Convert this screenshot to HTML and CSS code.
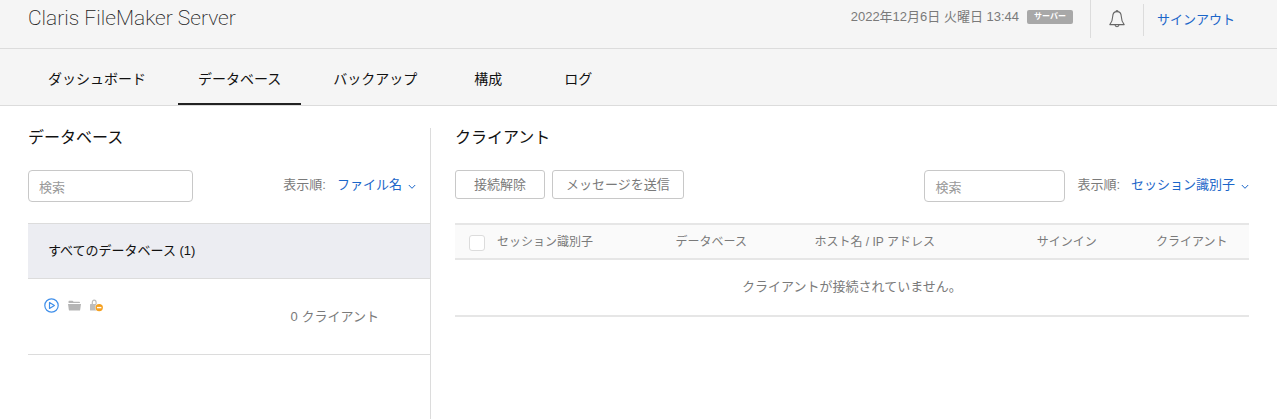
FILE: index.html
```html
<!DOCTYPE html>
<html lang="ja">

<head>
  <meta charset="utf-8">
  <title>Claris FileMaker Server</title>
  <link rel="stylesheet" href="styles.css">
</head>

<body>
  <header class="header">
    <h1 class="brand">Claris FileMaker Server</h1>
    <div class="status">
      <span>2022年12月6日 火曜日 13:44</span>
      <span class="badge">サーバー</span>
    </div>
    <button type="button" class="bell" aria-label="通知">
      <svg width="16" height="18" viewBox="0 0 16 18" fill="none" stroke="#666" stroke-width="1.1" stroke-linejoin="round">
        <path d="M8 1.6C5.2 1.6 3.8 3.8 3.7 6.4C3.6 10 2.9 12 .8 14.6H15.2C13.1 12 12.4 10 12.3 6.4C12.2 3.8 10.8 1.6 8 1.6Z"/>
        <path d="M7 1.6C7 .3 9 .3 9 1.6M6 14.8C6.2 17.4 9.8 17.4 10 14.8"/>
      </svg>
    </button>
    <div class="account">
      <a href="#">サインアウト</a>
    </div>
  </header>

  <nav class="tabs">
    <a href="#" class="tab">ダッシュボード</a>
    <a href="#" class="tab active">データベース</a>
    <a href="#" class="tab">バックアップ</a>
    <a href="#" class="tab">構成</a>
    <a href="#" class="tab">ログ</a>
  </nav>

  <main class="main">
    <section class="databases">
      <h2>データベース</h2>
      <div class="tools">
        <input type="text" class="search" placeholder="検索" aria-label="データベースを検索">
        <div class="sort">
          <label for="db-sort">表示順:</label>
          <select id="db-sort">
            <option>ファイル名</option>
          </select>
          <svg width="8" height="6" viewBox="0 0 8 6" fill="none" stroke="#1b66c9"><path d="M.8 1L4 4.3L7.2 1"/></svg>
        </div>
      </div>
      <div class="group">すべてのデータベース (1)</div>
      <div class="db">
        <div class="db-icons">
          <svg width="15" height="15" viewBox="0 0 15 15" fill="none" stroke="#3f8fea" stroke-linejoin="round">
            <circle cx="7.5" cy="7.5" r="6.7" stroke-width="1.2"/>
            <path d="M5.5 4.5V10.5L10.4 7.5Z" stroke-width="1.2"/>
          </svg>
          <svg width="13" height="11" viewBox="0 0 12 10" fill="#b5b5b5">
            <path d="M.5 1Q.5.5 1 .5H4.2L5.2 1.5H10.5Q11 1.5 11 2V2.8H.5Z"/>
            <path d="M0 3.6H12L11.2 9.1Q11.1 9.6 10.6 9.6H1.4Q.9 9.6.8 9.1Z"/>
          </svg>
          <svg width="13" height="13" viewBox="0 0 13 13">
            <path d="M2.3 6V3.6Q2.3 1.2 4.2 1.2T6.1 3.6V6" fill="none" stroke="#bdbdbd" stroke-width="1.2"/>
            <rect x="0" y="5" width="8" height="6.5" rx=".6" fill="#bdbdbd"/>
            <circle cx="9.2" cy="8.6" r="4" fill="#fff"/>
            <circle cx="9.2" cy="8.6" r="3.7" fill="#f5a01f"/>
            <path d="M7 8.6H11.4" stroke="#fff" stroke-width="1.4"/>
          </svg>
        </div>
        <span class="db-clients">0 クライアント</span>
      </div>
    </section>

    <section class="clients">
      <h2>クライアント</h2>
      <div class="tools">
        <div class="actions">
          <button type="button" class="btn">接続解除</button>
          <button type="button" class="btn">メッセージを送信</button>
        </div>
        <input type="text" class="search" placeholder="検索" aria-label="クライアントを検索">
        <div class="sort">
          <label for="client-sort">表示順:</label>
          <select id="client-sort">
            <option>セッション識別子</option>
          </select>
          <svg width="8" height="6" viewBox="0 0 8 6" fill="none" stroke="#1b66c9"><path d="M.8 1L4 4.3L7.2 1"/></svg>
        </div>
      </div>
      <table class="table">
        <thead>
          <tr>
            <th class="col-check"><input type="checkbox" aria-label="すべて選択"></th>
            <th class="col-session">セッション識別子</th>
            <th class="col-db">データベース</th>
            <th class="col-host">ホスト名 / IP アドレス</th>
            <th class="col-signin">サインイン</th>
            <th>クライアント</th>
          </tr>
        </thead>
        <tbody>
          <tr>
            <td colspan="6">クライアントが接続されていません。</td>
          </tr>
        </tbody>
      </table>
    </section>
  </main>
</body>

</html>
```
FILE: styles.css
```css
* {
  box-sizing: border-box;
}

body {
  margin: 0;
  min-height: 100vh;
  display: flex;
  flex-direction: column;
  font-family: "Liberation Sans", "Noto Sans CJK JP", sans-serif;
  font-size: 13px;
  line-height: 20px;
  color: #7a7a7a;
  background-color: #fff;
}

a {
  color: #1b66c9;
  text-decoration: none;
}

svg {
  display: block;
}

input,
select,
button {
  font: inherit;
}

/* header */

.header {
  display: flex;
  align-items: flex-start;
  height: 49px;
  padding: 0 28px;
  background-color: #f5f5f5;
  border-bottom: 1px solid #dcdcdc;
}

.brand {
  margin: 0 auto 0 0;
  font-family: Roboto, sans-serif;
  font-size: 21px;
  font-weight: 200;
  line-height: 36px;
  color: #222;
}

.status {
  display: flex;
  align-items: center;
  gap: 8px;
  height: 34px;
  margin-right: 17px;
}

.badge {
  padding: 0 7px;
  font-size: 8px;
  font-weight: bold;
  line-height: 14px;
  color: #fff;
  background-color: #a8a8a8;
  border-radius: 2px;
}

.bell {
  height: 38px;
  padding: 0 18px;
  background: none;
  border: none;
  border-left: 1px solid #dcdcdc;
  cursor: pointer;
}

.account {
  margin: 4px 14px 0 0;
  padding-left: 13px;
  line-height: 32px;
  border-left: 1px solid #dcdcdc;
}

/* tabs */

.tabs {
  display: flex;
  gap: 12px;
  padding: 0 28px;
  background-color: #f5f5f5;
  border-bottom: 1px solid #dcdcdc;
}

.tab {
  min-width: 78px;
  padding: 20px 20px 14px;
  font-size: 14px;
  text-align: center;
  color: #111;
  border-bottom: 2px solid transparent;
}

.tab.active {
  border-bottom-color: #222;
}

/* panels */

.main {
  flex: 1;
  display: flex;
  padding: 22px 28px 0;
}

.databases {
  flex: 0 0 33%;
  border-right: 1px solid #dcdcdc;
}

.clients {
  flex: 1;
  padding-left: 24px;
}

h2 {
  margin: 0 0 22px;
  font-size: 16px;
  font-weight: normal;
  line-height: 20px;
  color: #111;
}

.tools {
  display: flex;
  align-items: flex-start;
  margin-bottom: 21px;
}

.search {
  width: 165px;
  height: 32px;
  padding: 2px 10px 0;
  color: #333;
  border: 1px solid #c8c8c8;
  border-radius: 4px;
}

.search::placeholder {
  color: #999;
}

.sort {
  display: flex;
  align-items: center;
  height: 30px;
}

.sort label {
  margin-right: 11px;
}

.sort select {
  appearance: none;
  padding: 0;
  margin-right: 5px;
  color: #1b66c9;
  background: none;
  border: none;
}

.sort svg {
  margin-top: 4px;
}

.databases .sort {
  margin: 0 14px 0 auto;
}

.clients .search {
  width: 141px;
  margin: 0 12px 0 auto;
}

.actions {
  display: flex;
  gap: 7px;
}

.btn {
  min-width: 90px;
  height: 29px;
  padding: 0 13px;
  color: #7a7a7a;
  background-color: #fff;
  border: 1px solid #c8c8c8;
  border-radius: 3px;
  cursor: pointer;
}

/* database list */

.group {
  padding: 17px 20px;
  color: #111;
  background-color: #ecedf2;
  border: solid #dcdcdc;
  border-width: 1px 0;
}

.db {
  display: flex;
  justify-content: space-between;
  padding: 19px 51px 27px 16px;
  border-bottom: 1px solid #dcdcdc;
}

.db-icons {
  display: flex;
  align-items: center;
  gap: 9px;
  height: 15px;
}

.db-clients {
  margin-top: 9px;
}

/* client table */

.table {
  width: 100%;
  table-layout: fixed;
  border-collapse: collapse;
}

.table th {
  height: 35px;
  padding: 0;
  font-size: 12px;
  font-weight: normal;
  text-align: left;
  background-color: #fafafa;
  border: solid #e6e6e6;
  border-width: 2px 0;
}

.table td {
  height: 57px;
  padding: 0 0 2px;
  text-align: center;
  border-bottom: 2px solid #e6e6e6;
}

.table .col-check {
  width: 42px;
  padding-left: 14px;
}

.col-session {
  width: 22.5%;
}

.col-db {
  width: 17.5%;
}

.col-host {
  width: 28%;
}

.col-signin {
  width: 15%;
}

.table input {
  appearance: none;
  display: block;
  width: 16px;
  height: 16px;
  margin: 2px 0 0;
  background-color: #fff;
  border: 1px solid #dcdcdc;
  border-radius: 3px;
}
```
